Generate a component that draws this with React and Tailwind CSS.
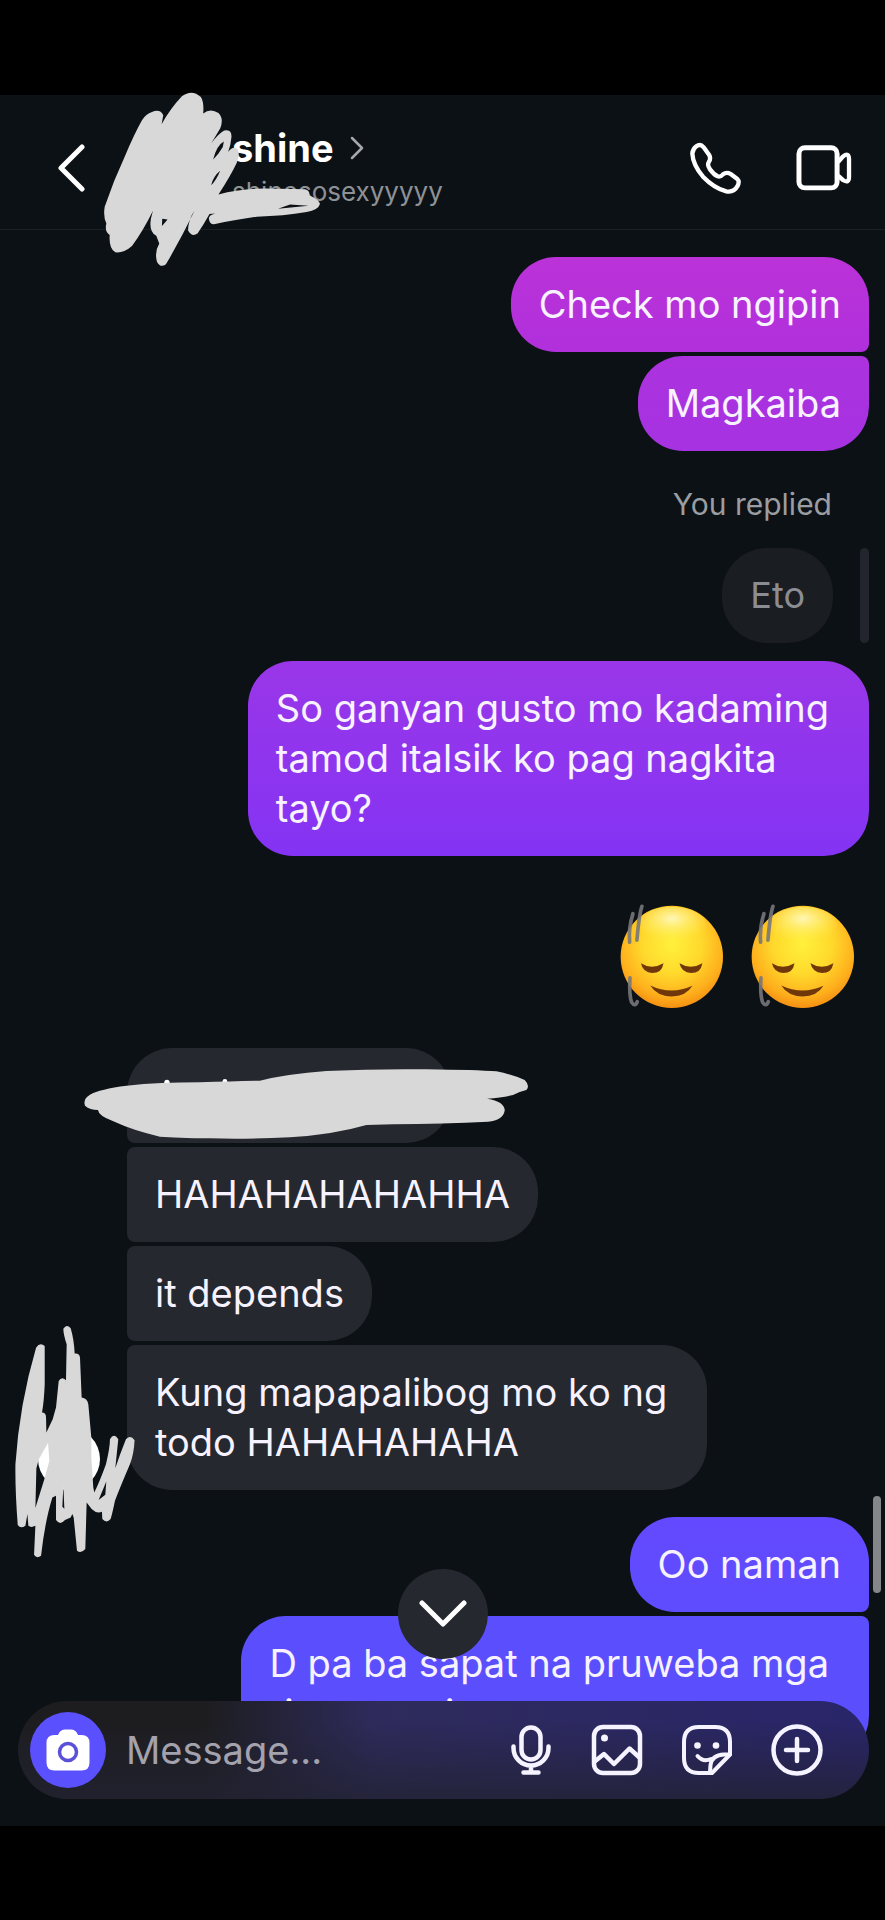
// ========================== IMPORTS ==========================
import React, { useState } from "react";
import clsx from "clsx";


// ========================== ICONS ==========================
const BackIcon = () => (
  <svg width="28" height="50" viewBox="0 0 28 50" fill="none" stroke="#fff" strokeWidth="5" strokeLinecap="round" strokeLinejoin="round">
    <path d="M24 4 3 25l21 21" />
  </svg>
);

const PhoneIcon = () => (
  <svg width="55" height="55" viewBox="625 178 165 165" fill="none" stroke="#fff" strokeWidth="13" strokeLinejoin="round">
    <path d="M650 194Q662 185 672 197L688 219Q695 231 687 242Q682 251 691 263Q703 279 714 284Q722 287 730 278Q741 270 753 277L773 292Q781 300 773 314Q763 333 740 329Q704 320 670 285Q640 250 638 216Q639 202 650 194Z" />
  </svg>
);

const VideoIcon = () => (
  <svg width="58" height="50" viewBox="945 186 175 150" fill="none" stroke="#fff" strokeWidth="15" strokeLinejoin="round">
    <rect x="957" y="200" width="115" height="121" rx="18" />
    <path strokeWidth="13" d="M1075 243 1090 226Q1108 213 1108 234V288Q1108 308 1091 298L1075 284" />
  </svg>
);

const CameraIcon = () => (
  <svg width="44" height="42" viewBox="0 0 44 42">
    <path fill="#fff" d="M13 4Q15 .5 19 .5h6Q29 .5 31 4l1 2h3.500Q43.500 6 43.500 14v19.500q0 8-8 8h-27q-8 0-8-8V14q0-8 8-8H12Z" />
    <circle cx="22" cy="23" r="8.500" fill="none" stroke="#5b50d8" strokeWidth="3.500" />
  </svg>
);

const MicIcon = () => (
  <svg width="44" height="52" viewBox="0 0 44 52" fill="none" stroke="#f5f3ff" strokeWidth="4.500" strokeLinecap="round">
    <rect x="12.500" y="3.500" width="19" height="32" rx="9.500" />
    <path d="M4.500 22.500v1.500a17.500 17.500 0 0 0 35 0v-1.500M22 42v6M14.500 48.500h15" />
  </svg>
);

const ImageIcon = () => (
  <svg width="52" height="52" viewBox="0 0 52 52" fill="none" stroke="#f5f3ff" strokeWidth="4.500" strokeLinejoin="round">
    <rect x="3" y="3" width="46" height="46" rx="9" />
    <path d="m3 38 10-8 10 10 15.500-15.500L49 34" />
    <circle cx="13.500" cy="14" r="3.500" fill="#f5f3ff" stroke="none" />
  </svg>
);

const StickerIcon = () => (
  <svg width="52" height="52" viewBox="0 0 52 52" fill="none" stroke="#f5f3ff" strokeWidth="4" strokeLinejoin="round" strokeLinecap="round">
    <path d="M31 49H18Q3 49 3 34V18Q3 3 18 3h16q15 0 15 15v12.500Z" />
    <path d="M49 30.500h-6Q31 31 29.500 41L29 48M16.500 32Q22 38.500 30 35" />
    <g fill="#f5f3ff" stroke="none">
      <circle cx="16.500" cy="21.500" r="3.300" />
      <circle cx="35" cy="21.500" r="3.300" />
    </g>
  </svg>
);

const PlusIcon = () => (
  <svg width="52" height="52" viewBox="0 0 52 52" fill="none" stroke="#f5f3ff" strokeWidth="4.500" strokeLinecap="round">
    <circle cx="26" cy="26" r="23.500" />
    <path d="M26 15v22M15 26h22" />
  </svg>
);

// Round relieved face, with grey pen marks on its left side
const FaceEmoji = () => (
  <svg width="108" height="108" viewBox="85 65 325 325" role="img" aria-label="Relieved face">
    <defs>
      <radialGradient id="face" cx="0.5" cy="0.38" r="0.64">
        <stop offset="0" stopColor="#fff03c" />
        <stop offset="0.45" stopColor="#ffd92c" />
        <stop offset="0.8" stopColor="#feaf1c" />
        <stop offset="1" stopColor="#f38a12" />
      </radialGradient>
      <radialGradient id="glow" cx="0.5" cy="0.3" r="0.6">
        <stop offset="0" stopColor="#fffbd0" stopOpacity="0.85" />
        <stop offset="1" stopColor="#fff45a" stopOpacity="0" />
      </radialGradient>
    </defs>
    <circle cx="247" cy="230" r="154" fill="url(#face)" />
    <ellipse cx="247" cy="138" rx="105" ry="58" fill="url(#glow)" />
    <g fill="#70380a">
      <path d="M154 249Q186 270 222 249Q217 279 188 279Q160 277 154 249Z" />
      <path d="M270 249Q304 270 339 249Q334 279 305 279Q276 277 270 249Z" />
      <path d="M182 316Q245 346 309 317Q290 349 246 349Q202 348 182 316Z" />
    </g>
    <g fill="none" stroke="#77777a" strokeWidth="11" strokeLinecap="round" opacity="0.9">
      <path d="M130 100Q116 145 120 186M157 78Q148 105 142 180M121 293Q118 345 126 367Q136 382 143 365" />
    </g>
  </svg>
);


// ========================== PEN MARKS ==========================
const HeaderScribble = () => (
  <svg className="absolute -top-2 left-[100px] z-10" width="227" height="183" viewBox="300 20 680 550" aria-hidden="true">
    <path
      fill="#d8d8d8"
      fillRule="evenodd"
      d="M455 95Q480 85 489 105L484 132Q510 85 545 48Q575 25 602 50Q612 65 609 100Q630 82 655 98Q672 115 660 145L633 190Q655 160 672 151Q695 145 694 170Q692 195 684 215Q700 195 713 208Q720 225 710 248Q690 290 655 343Q720 325 800 325L915 327Q930 330 928 345Q960 360 960 372Q955 390 920 396Q850 408 770 410Q700 420 645 432Q628 435 626 415Q626 405 645 400L628 402Q610 435 592 460Q575 472 564 452Q562 435 575 405L583 392Q540 480 497 553Q480 565 470 545Q462 515 477 490L468 467Q445 455 452 415L458 392Q430 450 395 498Q370 520 345 517Q325 505 328 465Q312 455 318 430Q308 410 313 380Q340 300 375 225Q400 165 425 120Q437 100 455 95Z
         M671 184Q650 195 639 238Q655 222 668 200ZM660 272Q640 288 633 315Q648 302 660 272ZM486 416 485 438 502 418ZM834 386 926 377 870 373Z"
    />
  </svg>
);

const MessageScribble = () => (
  <svg className="absolute top-4 -left-[47px]" width="453" height="80" viewBox="60 100 1360 240" aria-hidden="true">
    <circle cx="321" cy="155" r="8" fill="#fff" />
    <circle cx="495" cy="152" r="7" fill="#fff" />
    <path
      fill="#d8d8d8"
      d="M75 225Q68 205 90 192Q120 175 200 165Q300 155 420 155Q520 152 600 150Q680 130 800 121Q950 114 1100 116Q1250 118 1310 122Q1360 132 1395 148Q1412 165 1400 178Q1380 182 1360 193Q1330 200 1282 204Q1335 212 1335 240Q1330 268 1285 273Q1150 280 1000 281L920 283Q820 312 690 320Q560 326 450 323Q350 322 300 318Q220 300 160 272Q115 255 114 238Q90 238 75 225Z"
    />
  </svg>
);

const AvatarScribble = () => (
  <svg className="absolute -bottom-[74px] -left-7 z-10 max-w-none" width="130" height="243" viewBox="30 270 390 730" aria-hidden="true">
    <path
      fill="#d8d8d8"
      fillRule="evenodd"
      d="M108 350Q120 332 134 345L134 460Q132 510 126 545Q138 545 138 560L139 605L158 565Q165 540 168 530L176 450Q185 435 198 448L197 495L200 340Q190 310 190 293Q200 278 212 292Q222 325 224 368Q238 366 240 380L245 500Q262 502 265 520L274 620L274 680L280 770L283 785Q300 750 318 700Q330 650 330 625Q342 605 355 625L346 712Q360 670 378 625Q392 610 404 628Q402 670 390 700Q360 770 345 810Q338 845 332 865Q320 880 307 865L306 843Q290 850 275 835L260 815L256 955Q243 970 231 960L221 860L217 850L212 860L195 868Q180 885 168 868L168 795L157 800Q135 870 123 975Q110 985 102 972L106 885Q93 892 85 885L82 850L76 885Q62 895 53 883Q45 780 46 700Q58 520 108 350Z
         M144 636 116 686 109 712 106 832 134 742 148 690ZM190 765 187 828 193 834ZM319 752 316 792 296 808Z"
    />
  </svg>
);


// ========================== BUBBLE ==========================
// Wrapped text keeps a wider right side than a single line does
const Bubble = ({ wrapped, className, children }) => (
  <p className={clsx("w-fit pl-7 pt-[22px] pb-[23px] rounded-[45px]", wrapped ? "pr-10" : "pr-7", className)}>
    {children}
  </p>
);


// ========================== COMPONENT ==========================
const App = () => {

  // ========================== STATE ==========================
  const [message, setMessage] = useState("");


  // ========================== JSX ==========================
  return (
    <div className="min-h-screen flex flex-col bg-black pt-[95px] pb-[94px] font-['Inter',sans-serif] text-[38px] leading-[50px] text-[#f7f2ff]">

      <div className="relative flex-1 flex flex-col bg-[#0c1115]">

        {/* ================= HEADER ================= */}
        <header className="relative flex items-center pt-[31px] pb-[19px] pl-[58px] pr-8 border-b border-[#1b2024]">

          <button aria-label="Back" className="mr-[146px]">
            <BackIcon />
          </button>

          <div className="flex-1">
            <h1 className="flex items-center gap-4 text-[38px] leading-[44px] font-bold text-white">
              shine
              <svg width="14" height="24" viewBox="0 0 14 24" fill="none" stroke="#a5a8ac" strokeWidth="2.500" strokeLinecap="round" strokeLinejoin="round">
                <path d="m2 2 10 10L2 22" />
              </svg>
            </h1>
            <p className="mt-1 text-[26px] leading-9 text-[#8e9196]">shinesosexyyyyy</p>
          </div>

          <div className="flex items-center gap-[52px]">
            <button aria-label="Audio call"><PhoneIcon /></button>
            <button aria-label="Video call"><VideoIcon /></button>
          </div>

          <HeaderScribble />
        </header>


        {/* ================= MESSAGES ================= */}
        <main className="flex-1 flex flex-col px-4 pt-[27px] pb-[65px]">

          <div className="flex flex-col items-end gap-1">
            <Bubble className="rounded-br-lg bg-linear-to-b from-[#bb32d8] to-[#b030dc]">Check mo ngipin</Bubble>
            <Bubble className="rounded-tr-lg bg-linear-to-b from-[#ac32de] to-[#a632e2]">Magkaiba</Bubble>
          </div>

          {/* Quoted reply */}
          <p className="mt-[35px] pr-[37px] text-right text-[30px] leading-9 text-[#9a9da2]">You replied</p>
          <div className="mt-[26px] flex justify-end gap-[27px]">
            <Bubble className="bg-[#1a1d22] text-[36px] text-[#8b8d92]">Eto</Bubble>
            <span className="w-[9px] rounded-full bg-[#22252d]" />
          </div>

          <Bubble wrapped className="mt-[18px] self-end bg-linear-to-b from-[#9a36e8] to-[#8433f4]">
            So ganyan gusto mo kadaming<br />
            tamod italsik ko pag nagkita<br />
            tayo?
          </Bubble>

          <div className="mt-[46px] pr-3 flex justify-end gap-[23px]">
            <FaceEmoji />
            <FaceEmoji />
          </div>

          {/* Received */}
          <div className="mt-[38px] pl-[22px] flex items-end gap-[27px]">
            <div className="relative shrink-0 size-[62px] rounded-full bg-white">
              <AvatarScribble />
            </div>
            <div className="flex flex-col items-start gap-1">
              <div className="relative w-[324px] h-[95px] rounded-[45px] rounded-bl-lg bg-[#25282f]">
                <MessageScribble />
              </div>
              <Bubble className="rounded-l-lg bg-[#25282f]">HAHAHAHAHAHHA</Bubble>
              <Bubble className="rounded-l-lg bg-[#25282f]">it depends</Bubble>
              <Bubble wrapped className="rounded-tl-lg bg-[#25282f]">
                Kung mapapalibog mo ko ng<br />
                todo HAHAHAHAHA
              </Bubble>
            </div>
          </div>

          {/* Sent */}
          <div className="mt-[27px] flex flex-col items-end gap-1">
            <Bubble className="rounded-br-lg bg-linear-to-b from-[#6449ff] to-[#5e4cff]">Oo naman</Bubble>
            <Bubble wrapped className="rounded-tr-lg bg-[#5b4ffd]">
              D pa ba sapat na pruweba mga<br />
              rinasam ni
            </Bubble>
          </div>

        </main>


        {/* ================= SCROLL BAR ================= */}
        <span className="absolute right-1 bottom-[233px] w-2 h-[97px] rounded-full bg-[#85868a]" />


        {/* ================= SCROLL DOWN ================= */}
        <button
          aria-label="Scroll to latest"
          className="absolute bottom-[167px] left-1/2 -translate-x-1/2 size-[90px] rounded-full bg-[#25282f] flex items-center justify-center"
        >
          <svg width="48" height="28" viewBox="0 0 48 28" fill="none" stroke="#fff" strokeWidth="5" strokeLinecap="round" strokeLinejoin="round">
            <path d="m3 3 21 21L45 3" />
          </svg>
        </button>


        {/* ================= COMPOSER ================= */}
        <form
          onSubmit={(e) => e.preventDefault()}
          className="absolute bottom-[27px] left-[18px] right-4 h-[98px] pl-3 pr-[46px] rounded-full flex items-center bg-[linear-gradient(to_bottom,transparent_20%,#222232cc),linear-gradient(to_right,#1d1d20_22%,#2e2b5c_42%,#29256a)]"
        >
          <button type="button" aria-label="Camera" className="shrink-0 size-[76px] rounded-full bg-[#5b50fd] flex items-center justify-center">
            <CameraIcon />
          </button>

          <input
            type="text"
            aria-label="Message"
            placeholder="Message..."
            value={message}
            onChange={(e) => setMessage(e.target.value)}
            className="flex-1 min-w-0 ml-5 bg-transparent outline-none placeholder:text-[#a3a2ad]"
          />

          <div className="flex items-center gap-[38px]">
            <button type="button" aria-label="Voice message"><MicIcon /></button>
            <button type="button" aria-label="Photo"><ImageIcon /></button>
            <button type="button" aria-label="Sticker"><StickerIcon /></button>
            <button type="button" aria-label="More"><PlusIcon /></button>
          </div>
        </form>

      </div>

    </div>
  );
};


// ========================== EXPORT ==========================
export default App;
